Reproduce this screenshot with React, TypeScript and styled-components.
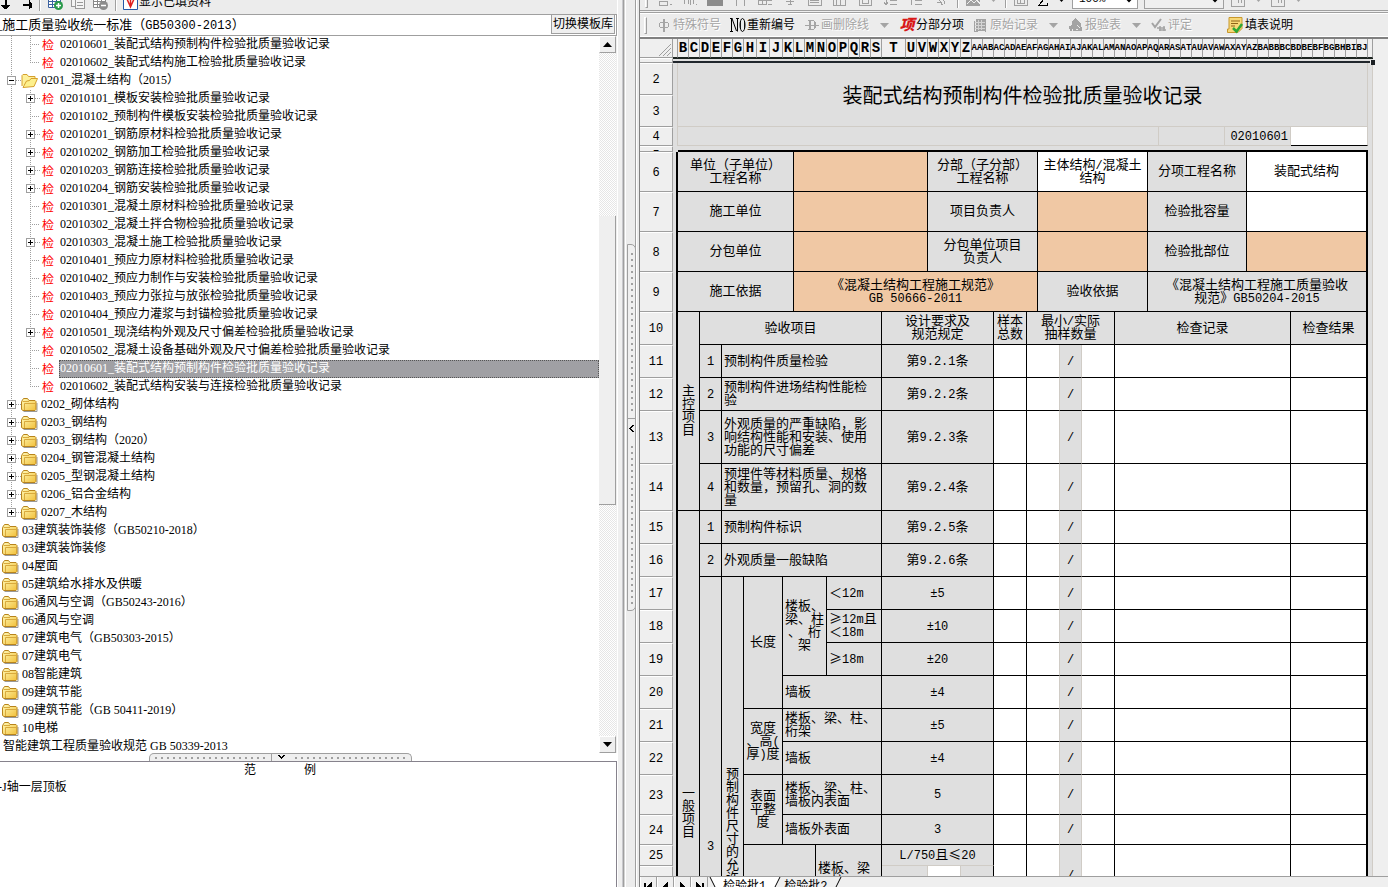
import React from "react";
import styled, { createGlobalStyle, css } from "styled-components";

const GlobalStyle = createGlobalStyle`
  *, *::before, *::after { box-sizing: border-box; }
  html, body { margin: 0; height: 100%; overflow: hidden; background: #efefef; }
  #root { height: 100%; }
  body, button, input, select {
    font-family: "Liberation Serif", "Noto Sans CJK SC", serif;
    font-size: 12px;
    color: #000;
  }
  button { margin: 0; padding: 0; border: 0; background: none; }
`;

const LINE = "#9f9f9f";
const FAINT = "#d0ccc6";
const GREY = "#dfdfdf";
const PEACH = "#f0c8a4";

const Half = styled.span`
  font-family: "Liberation Mono", monospace;
  font-size: 12px;
  line-height: 0;
`;

/* Latin runs are set in a fixed-pitch face beside the Chinese text. */
function Mixed({ text }: { text: string }) {
  return (
    <>
      {text.split(/([\x20-\x7e±]+)/).map((part, i) =>
        i % 2 ? <Half key={i}>{part}</Half> : part
      )}
    </>
  );
}

/* ---------- frame ---------- */

const Window = styled.div`
  display: grid;
  grid-template-columns: minmax(0, 617fr) 23px minmax(0, 748fr);
  height: 100vh;
  background: #efefef;
`;

const LeftPane = styled.section`
  display: flex;
  flex-direction: column;
  min-height: 0;
`;

const RightPane = styled.section`
  display: flex;
  flex-direction: column;
  min-height: 0;
  overflow: hidden;
`;

const SplitterBar = styled.div`
  display: flex;
  flex-direction: column;
  align-items: flex-end;
  justify-content: center;
  padding: 0 4px 32px 0;
  background: linear-gradient(
    90deg,
    #fff 0 1px, #efefef 1px 5px, #c8c8cc 5px 6px, ${LINE} 6px 7px, #d4d4d4 7px 8px,
    #fff 8px 9px, #ececec 9px 18px, ${LINE} 18px 19px, #fff 19px 20px,
    #ececec 20px 22px, #808080 22px 23px
  );
`;

const SideGrip = styled.div`
  display: flex;
  flex-direction: column;
  width: 9px;
  height: 367px;
  border: 1px solid ${LINE};
  border-radius: 0 5px 5px 0;
  background: #efefef;
`;

const SideDots = styled.div`
  flex: 1;
  margin: 8px 2px 4px 3px;
  background-image: linear-gradient(${LINE} 2px, #efefef 2px);
  background-size: 2px 6px;
  background-repeat: repeat-y;
`;

const GripButton = styled.button<{ $wide?: boolean }>`
  display: flex;
  align-items: center;
  justify-content: center;
  background: #efefef;
  border: 0 solid ${LINE};
  ${(p) => (p.$wide ? css`width: 19px; border-left-width: 1px;` : css`height: 20px; border-top-width: 1px;`)}
`;

/* ---------- left tool bar ---------- */

const ClippedBar = styled.div<{ $h: number }>`
  flex: 0 0 ${(p) => p.$h}px;
  overflow: hidden;
  background: #ececec;
  border-bottom: 1px solid ${LINE};
`;

const LeftTools = styled.div`
  display: flex;
  align-items: center;
  height: 24px;
  margin-top: -10px;
  gap: 6px;
`;

const ToolButton = styled.button<{ $off?: boolean }>`
  display: flex;
  align-items: center;
  gap: 1px;
  white-space: nowrap;
  line-height: 16px;
  color: ${(p) => (p.$off ? "#a4a4a4" : "#000")};
  text-shadow: ${(p) => (p.$off ? "1px 1px 0 #fff" : "none")};
`;

const Divider = styled.span`
  width: 2px;
  height: 18px;
  border-left: 1px solid ${LINE};
  border-right: 1px solid #fff;
`;

const CheckLabel = styled.label`
  display: flex;
  align-items: center;
  gap: 1px;
  line-height: 16px;
`;

const LibraryRow = styled.header`
  display: flex;
  flex: 0 0 21px;
  justify-content: space-between;
  background: #fff;
  border-bottom: 1px solid ${LINE};
  border-right: 1px solid ${LINE};
  padding-right: 1px;
`;

const LibraryName = styled.div`
  margin-left: -5px;
  font-family: "Noto Sans CJK SC", sans-serif;
  font-size: 13px;
  line-height: 17px;
  white-space: nowrap;
`;

const SwitchButton = styled.button`
  width: 64px;
  height: 19px;
  background: #efefef;
  border: 1px solid ${LINE};
  border-top: 0;
  line-height: 18px;
  white-space: nowrap;
`;

/* ---------- tree ---------- */

const TreePanel = styled.div`
  display: flex;
  flex: 1;
  min-height: 0;
  background: #fff;
  overflow: hidden;
`;

const TreeList = styled.ul`
  flex: 1;
  min-width: 0;
  margin: 0;
  padding: 0;
  list-style: none;
  overflow: hidden;
`;

const TreeRow = styled.li`
  display: flex;
  height: 18px;
  padding-left: 2px;
`;

const Guide = styled.span<{ $end?: boolean; $branch?: boolean; $box?: boolean }>`
  display: flex;
  flex: 0 0 19px;
  align-items: center;
  padding: 0 0 2px ${(p) => (p.$box ? 5 : 9)}px;
  background: repeating-linear-gradient(${LINE} 0 1px, transparent 1px 2px) 9px 0 / 1px
    ${(p) => (p.$end ? 9 : 18)}px no-repeat;

  &::after {
    content: "";
    flex: 1;
    height: ${(p) => (p.$branch ? 1 : 0)}px;
    background: repeating-linear-gradient(90deg, ${LINE} 0 1px, transparent 1px 2px);
  }
`;

const NodeIcon = styled.span`
  display: flex;
  flex: 0 0 19px;
  align-items: center;
  padding-bottom: 1px;
`;

const InspectMark = styled.span`
  padding: 2px 0 0 2px;
  color: #f00;
  line-height: 16px;
`;

const NodeLabel = styled.span<{ $on?: boolean }>`
  flex: ${(p) => (p.$on ? "1" : "0 0 auto")};
  padding-left: 1px;
  line-height: 17px;
  white-space: nowrap;
  ${(p) =>
    p.$on &&
    css`
      padding-left: 0;
      background: #a0a0a4;
      color: #fff;
      border: 1px dotted #555;
      line-height: 15px;
    `}
`;

const ScrollTrack = styled.div`
  display: flex;
  flex: 0 0 18px;
  flex-direction: column;
  background: repeating-conic-gradient(#e6e6e6 0 25%, #fff 0 50%) 0 0 / 2px 2px;
  border-right: 1px solid #efefef;
`;

const ScrollButton = styled.button`
  display: flex;
  flex: 0 0 17px;
  align-items: center;
  justify-content: center;
  background: #efefef;
  border: 1px solid ${LINE};
  border-top-color: #fff;
  border-left-color: #fff;
`;

const TrackGap = styled.div<{ $grow: number }>`
  flex: ${(p) => p.$grow} 0 0;
`;

const Thumb = styled.div`
  flex: 289 0 0;
  background: #efefef;
  border-right: 1px solid ${LINE};
  border-bottom: 1px solid ${LINE};
`;

const BottomGripRow = styled.div`
  display: flex;
  flex: 0 0 9px;
  justify-content: center;
  padding-right: 56px;
  background: #fff;
  border-bottom: 1px solid #86828c;
`;

const BottomGrip = styled.div`
  display: flex;
  width: 263px;
  border: 1px solid ${LINE};
  border-bottom: 0;
  border-radius: 5px 5px 0 0;
  background: #efefef;
`;

const BottomDots = styled.div`
  flex: 1;
  height: 2px;
  margin: 3px 3px 0 5px;
  background-image: linear-gradient(90deg, ${LINE} 2px, #efefef 2px);
  background-size: 6px 2px;
`;

const ExamplePanel = styled.div`
  flex: 0 0 125px;
  background: #fff;
  border-right: 1px solid #86828c;
  overflow: hidden;
`;

const ExampleHead = styled.h2`
  display: flex;
  justify-content: center;
  gap: 48px;
  margin: 0;
  padding-right: 56px;
  font-size: 12px;
  font-weight: 400;
  line-height: 17px;
`;

const ExampleLine = styled.div`
  margin-left: -2px;
  line-height: 16px;
`;

/* ---------- right tool bars ---------- */

const FormatTools = styled.div`
  display: flex;
  align-items: center;
  height: 24px;
  margin-top: -13px;
  padding-left: 5px;
  gap: 9px;
`;

const TightTools = styled.div`
  display: flex;
  align-items: center;
  gap: 6px;
`;

const ZoomSelect = styled.select`
  width: 66px;
  height: 20px;
  padding: 0 2px;
  border: 1px solid ${LINE};
  border-radius: 0;
  background: #fff;
  font-family: "Liberation Mono", monospace;
  font-size: 11px;
`;

const StyleSelect = styled(ZoomSelect)`
  width: 80px;
  background: #efefef;
`;

const ActionTools = styled.div`
  display: flex;
  flex: 0 0 27px;
  align-items: center;
  gap: 9px;
  padding-left: 4px;
  background: #ececec;
  border-top: 1px solid ${LINE};
  border-bottom: 2px solid #808080;
  box-shadow: inset 0 1px 0 #fff, inset 0 -1px 0 #fff;
  margin-top: 1px;
`;

const BarGrip = styled.span`
  width: 3px;
  height: 17px;
  border: 1px solid ${LINE};
  border-left-color: #fff;
  border-top-color: #fff;
`;

const CaretButton = styled.button`
  display: flex;
  width: 12px;
  justify-content: center;
`;

const Gap = styled.span<{ $w: number }>`
  flex: 0 0 ${(p) => p.$w}px;
`;

/* ---------- sheet ---------- */

const SheetView = styled.div`
  position: relative;
  flex: 1;
  min-height: 0;
  overflow: hidden;
  background: #efefef;
`;

const ColumnStrip = styled.div`
  display: flex;
  height: 19px;
`;

const Corner = styled.div`
  display: flex;
  flex: 0 0 33px;
  justify-content: flex-end;
  align-items: flex-end;
  border-right: 1px solid ${LINE};
  border-bottom: 1px solid ${LINE};
`;

const ColumnHead = styled.div<{ $w: number; $small?: boolean }>`
  display: flex;
  flex: 0 0 ${(p) => p.$w}px;
  min-width: 0;
  justify-content: center;
  border-right: 1px solid ${LINE};
  border-bottom: 1px solid #1c2420;
  font: 700 ${(p) => (p.$small ? 9 : 14)}px/18px "Liberation Mono", monospace;
`;

const Grid = styled.table`
  width: 733px;
  table-layout: fixed;
  border-collapse: separate;
  border-spacing: 0;
  font-family: "Noto Sans CJK SC", sans-serif;
  font-size: 13px;
  line-height: 13px;
`;

const GridRow = styled.tr<{ $h: number }>`
  height: ${(p) => p.$h}px;
`;

const RowHead = styled.th<{ $h: number }>`
  padding: 0 0 ${(p) => (p.$h > 18 ? 4 : 0)}px;
  font-weight: 400;
  background: #efefef;
  border-top: 1px solid #fff;
  border-right: 1px solid ${LINE};
  border-bottom: 1px solid ${LINE};
`;

const RowNumber = styled.span<{ $max: number }>`
  display: block;
  max-height: ${(p) => p.$max}px;
  overflow: hidden;
`;

const Cell = styled.td<{
  $bg?: string;
  $align?: string;
  $right?: string;
  $bottom?: string;
  $top?: string;
  $size?: number;
  $filled?: boolean;
}>`
  padding: 0 2px ${(p) => (p.$filled && !p.$size ? 4 : 0)}px;
  overflow: hidden;
  white-space: pre;
  vertical-align: middle;
  text-align: ${(p) => p.$align ?? "center"};
  background: ${(p) => p.$bg ?? GREY};
  border-right: ${(p) => p.$right ?? "1px solid #000"};
  border-bottom: ${(p) => p.$bottom ?? "1px solid #000"};
  border-top: ${(p) => p.$top ?? "0"};
  font-size: ${(p) => p.$size ?? 13}px;
  line-height: ${(p) => (p.$size ? p.$size + 4 : 13)}px;
`;

const FillHandle = styled.span`
  position: absolute;
  left: 730px;
  top: 21px;
  width: 5px;
  height: 5px;
  background: #1c2024;
  border-left: 1px solid #efefef;
`;

const SheetTabs = styled.nav`
  display: flex;
  flex: 0 0 11px;
  overflow: hidden;
  border-top: 1px solid ${LINE};
`;

const TabNav = styled.button`
  display: flex;
  flex: 0 0 17px;
  height: 18px;
  align-items: center;
  justify-content: center;
  border-right: 1px solid ${LINE};
  border-left: 1px solid #fff;
`;

const Tab = styled.button<{ $on?: boolean }>`
  height: 18px;
  padding: 0 3px;
  line-height: 17px;
  white-space: nowrap;
  background: ${(p) => (p.$on ? "#fff" : "#efefef")};
`;

/* ---------- drawings ---------- */

const Svg = ({ w = 16, h = 16, children }: { w?: number; h?: number; children: React.ReactNode }) => (
  <svg width={w} height={h} viewBox={`0 0 ${w} ${h}`} fill="none" shapeRendering="crispEdges" aria-hidden="true">
    {children}
  </svg>
);

const Triangle = ({ dir = "down", color = "#000" }: { dir?: "up" | "down"; color?: string }) => (
  <svg width="9" height="5" viewBox="0 0 9 5" aria-hidden="true">
    <path d={dir === "up" ? "M4.500 0 9 5H0Z" : "M0 0h9L4.500 5Z"} fill={color} />
  </svg>
);

const Folder = ({ open }: { open?: boolean }) => (
  <svg width="17" height="16" viewBox="0 0 17 16" fill="none" aria-hidden="true">
    <defs>
      <linearGradient id="fold" x1="0" y1="0" x2="1" y2="1">
        <stop offset="0" stopColor="#fffab8" />
        <stop offset="1" stopColor="#f2bf38" />
      </linearGradient>
    </defs>
    {open ? (
      <>
        <path d="M1 13V2.500l1-1h4l1.500 2H14V7" fill="#fdf09a" stroke="#d6a02c" />
        <path d="M2 14.500 5.500 8l3-.5 1.500-2h6.500L13 13.500Z" fill="#fdf08c" stroke="#d6a02c" />
      </>
    ) : (
      <>
        <path d="M2.500 14.500h13.500V6" stroke="#999" />
        <path d="M.5 12.500V4.500l2-3h4l1.500 2h6l1 1v8l-1 1h-12Z" fill="url(#fold)" stroke="#b8841c" />
        <path d="M1.500 4.500h6.500M3.500 13V6.500h11" stroke="#d9a93c" />
      </>
    )}
  </svg>
);

const Expander = ({ open }: { open?: boolean }) => (
  <Svg w={9} h={9}>
    <path d="M.5.5h8v8h-8Z" fill="#fff" stroke={LINE} />
    <path d={open ? "M2 4.500h5" : "M2 4.500h5M4.500 2v5"} stroke="#000" />
  </Svg>
);

const SheetIcon = ({ badge }: { badge?: string }) => (
  <svg width="17" height="18" viewBox="0 0 17 18" aria-hidden="true">
    <path d="M1.500 1.500h12v13h-12ZM1.500 5.500h12M1.500 8.500h12M1.500 11.500h12M5.500 1.500v13M9.500 1.500v13" stroke={badge === "+" ? "#3c62a0" : "#888"} fill="#fff" />
    <circle cx="11.500" cy="12.500" r="4.500" fill={badge === "+" ? "#2a9a4a" : "#8c8c8c"} />
    <path d={badge === "+" ? "M9 12.500h5M11.500 10v5" : "M9 12.500h5"} stroke="#fff" strokeWidth="1.500" />
  </svg>
);

const CopyIcon = () => (
  <Svg>
    <path d="M1.500 1.500h8v11h-8Z" fill="#f4f4f4" stroke="#999" />
    <path d="M5.500 3.500h9v11h-9Z" fill="#f4f4f4" stroke="#999" />
    <path d="M7 8.500h6M7 11.500h6" stroke="#999" />
  </Svg>
);

const FilledIcon = () => (
  <svg width="15" height="16" viewBox="0 0 15 16" aria-hidden="true">
    <path d="M.5.5h14v15H.5Z" fill="#fff" stroke="#2458a8" />
    <path d="M4 5 7.500 13 11 5M7.500 13V6" stroke="#e02020" strokeWidth="1.500" fill="none" />
  </svg>
);

const SymbolIcon = () => (
  <Svg>
    <path d="M4 5.500h8M4 10.500h8M3.500 6v4M12.500 6v4M7.500 2v13M8.500 2v13" stroke="#a4a4a4" />
  </Svg>
);

const NumberIcon = () => (
  <svg width="16" height="16" viewBox="0 0 16 16" fill="none" stroke="#000" aria-hidden="true">
    <path d="M0 1.500h2.500M0 14.500h3M1.500 1v13M2 1.500 6.500 14M7.500 1v13.500M6 1.500h3" />
    <ellipse cx="12.500" cy="8" rx="2.500" ry="6.500" />
    <path d="M10.500 4v8M14.500 4v8" strokeWidth=".8" />
  </svg>
);

const StrikeIcon = () => (
  <Svg>
    <path d="M4 3.500h6M4 12.500h6M5.500 3v10M11.500 5v6M10.500 4v8M6.500 4v8M1 8.500h14" stroke="#a4a4a4" />
  </Svg>
);

const RedItem = styled.span`
  width: 16px;
  color: #d81818;
  font-size: 15px;
  font-weight: 900;
  font-style: italic;
`;

const RecordIcon = () => (
  <Svg>
    <path d="M3 2h9v12H3Z" fill="#a4a4a4" />
    <path d="M5 3v10M8 3v10M2 5h10M2 8h10M2 11h10" stroke="#d4d4d4" />
    <path d="M1.500 4v10h3M12.500 2v13" stroke="#a4a4a4" />
  </Svg>
);

const ReportIcon = () => (
  <Svg>
    <path d="M4 5 7 1l3 3 3 2 1 8H2L1 9l3-1Z" fill="#a4a4a4" />
    <path d="M4 12v2M9 8l3 3M8 12h2" stroke="#ececec" />
  </Svg>
);

const RateIcon = () => (
  <svg width="16" height="16" viewBox="0 0 16 16" fill="none" stroke="#a4a4a4" aria-hidden="true">
    <path d="m1 6 3 4 6-8" strokeWidth="2" />
    <path d="M6 11h8M9 9v5M8 13h7M13 9v5" strokeWidth="1.500" />
  </svg>
);

const GuideIcon = () => (
  <svg width="17" height="17" viewBox="0 0 17 17" aria-hidden="true">
    <path d="M2 .5h13v11l-4 4H.5V12H2Z" fill="#f7d878" stroke="#c8982c" />
    <path d="M4 4h9M4 6.500h7M4 9h4" stroke="#8c6418" />
    <path d="m6 11 3.500 3.500L15 7" stroke="#2fa834" strokeWidth="2.500" fill="none" />
  </svg>
);

/* Outline shapes of the greyed format icons. */
const formatIcons = [
  "M3 3h7v5H3ZM2 10h8v4H2Z M13 4v3M13 13h2",
  "M2 13V7h4v6M8 4v10M11 6v7M14 13h1",
  "",
  "M4 15V5h8v10M4 8h8",
  "M1 5h8v8H1ZM1 9h14M5 5v8M11 13h4",
  "M8 2v12M4 10h8M6 13h4",
  "M1 6h13v8H1ZM3 9h9M3 11h9M14 2v12",
  "M1 7h12v7H1ZM4 7v7M8 7v7M13 3v9",
  "M2 4h12v10H2ZM5 7h6v5H5Z",
  "M4 3v11M2 11l2 3 2-3M8 9h7M8 13h7",
  "M4 3v11M2 6l2-3 2 3M8 9h7M8 13h7",
  "M3 4l8 10M5 11h4v3M10 5l3 8",
];

function FormatIcon({ d }: { d: string }) {
  return (
    <Svg>{d ? <path d={d} stroke="#a0a0a0" /> : <path d="M0 1h16v14H0Z" fill="#8c8c8c" />}</Svg>
  );
}

/* ---------- tree data ---------- */

type Node = { lv: number; t: string; box?: "+" | "-"; on?: boolean; last?: boolean };

const nodes: Node[] = [
  { lv: 2, t: "02010601_装配式结构预制构件检验批质量验收记录" },
  { lv: 2, t: "02010602_装配式结构施工检验批质量验收记录", last: true },
  { lv: 1, t: "0201_混凝土结构（2015）", box: "-" },
  { lv: 2, t: "02010101_模板安装检验批质量验收记录", box: "+" },
  { lv: 2, t: "02010102_预制构件模板安装检验批质量验收记录" },
  { lv: 2, t: "02010201_钢筋原材料检验批质量验收记录", box: "+" },
  { lv: 2, t: "02010202_钢筋加工检验批质量验收记录", box: "+" },
  { lv: 2, t: "02010203_钢筋连接检验批质量验收记录", box: "+" },
  { lv: 2, t: "02010204_钢筋安装检验批质量验收记录", box: "+" },
  { lv: 2, t: "02010301_混凝土原材料检验批质量验收记录" },
  { lv: 2, t: "02010302_混凝土拌合物检验批质量验收记录" },
  { lv: 2, t: "02010303_混凝土施工检验批质量验收记录", box: "+" },
  { lv: 2, t: "02010401_预应力原材料检验批质量验收记录" },
  { lv: 2, t: "02010402_预应力制作与安装检验批质量验收记录" },
  { lv: 2, t: "02010403_预应力张拉与放张检验批质量验收记录" },
  { lv: 2, t: "02010404_预应力灌浆与封锚检验批质量验收记录" },
  { lv: 2, t: "02010501_现浇结构外观及尺寸偏差检验批质量验收记录", box: "+" },
  { lv: 2, t: "02010502_混凝土设备基础外观及尺寸偏差检验批质量验收记录" },
  { lv: 2, t: "02010601_装配式结构预制构件检验批质量验收记录", on: true },
  { lv: 2, t: "02010602_装配式结构安装与连接检验批质量验收记录", last: true },
  { lv: 1, t: "0202_砌体结构", box: "+" },
  { lv: 1, t: "0203_钢结构", box: "+" },
  { lv: 1, t: "0203_钢结构（2020）", box: "+" },
  { lv: 1, t: "0204_钢管混凝土结构", box: "+" },
  { lv: 1, t: "0205_型钢混凝土结构", box: "+" },
  { lv: 1, t: "0206_铝合金结构", box: "+" },
  { lv: 1, t: "0207_木结构", box: "+", last: true },
  { lv: 0, t: "03建筑装饰装修（GB50210-2018）" },
  { lv: 0, t: "03建筑装饰装修" },
  { lv: 0, t: "04屋面" },
  { lv: 0, t: "05建筑给水排水及供暖" },
  { lv: 0, t: "06通风与空调（GB50243-2016）" },
  { lv: 0, t: "06通风与空调" },
  { lv: 0, t: "07建筑电气（GB50303-2015）" },
  { lv: 0, t: "07建筑电气" },
  { lv: 0, t: "08智能建筑" },
  { lv: 0, t: "09建筑节能" },
  { lv: 0, t: "09建筑节能（GB 50411-2019）" },
  { lv: 0, t: "10电梯" },
  { lv: -1, t: "智能建筑工程质量验收规范 GB 50339-2013" },
];

function TreeNode({ n }: { n: Node }) {
  return (
    <TreeRow>
      {n.lv === 2 && <Guide />}
      {n.lv > 0 && (
        <Guide $branch $end={n.last} $box={!!n.box}>
          {n.box && <Expander open={n.box === "-"} />}
        </Guide>
      )}
      {n.lv >= 0 && (
        <NodeIcon>{n.lv === 2 ? <InspectMark>检</InspectMark> : <Folder open={n.box === "-"} />}</NodeIcon>
      )}
      <NodeLabel $on={n.on}>{n.t}</NodeLabel>
    </TreeRow>
  );
}

/* ---------- sheet data ---------- */

const colWidths = [33, 5, 22, 22, 22, 39, 11, 22, 11, 55, 46, 33, 33, 33, 11, 22, 22, 33, 33, 11, 66, 22, 44, 77, 5];

const letters = (() => {
  const out: { t: string; w: number }[] = [];
  const abc = "ABCDEFGHIJKLMNOPQRSTUVWXYZ";
  for (let i = 1; i < 62; i++) {
    const t = i < 26 ? abc[i] : abc[Math.floor(i / 26) - 1] + abc[i % 26];
    out.push({ t, w: "HIJ".includes(t) ? 13 : t === "T" ? 24 : 11 });
  }
  return out;
})();

type C = {
  t?: string;
  cs?: number;
  rs?: number;
  bg?: string;
  al?: string;
  r?: string;
  b?: string;
  top?: string;
  size?: number;
};

const faint = `1px solid ${FAINT}`;
const thick = "2px solid #000";
const none = "0";
const edgeL: C = { r: thick, b: none };
const edgeR: C = { r: faint, b: none };
const white = "#fff";

const fill = (rs = 1): C[] => [
  { bg: white, rs },
  { bg: white, cs: 2, r: faint, rs },
  { t: "/", r: faint, rs },
  { bg: white, rs },
  { bg: white, cs: 5, rs },
  { bg: white, r: thick, rs },
];

const rows: { n: string; h: number; c: C[] }[] = [
  { n: "·", h: 5, c: [{ cs: 24, r: none, top: "1px solid #1c2420", b: "2px solid #20262c" }] },
  {
    n: "2", h: 32,
    c: [{ r: faint, b: none }, { t: "装配式结构预制构件检验批质量验收记录", cs: 22, rs: 2, size: 20, r: faint, b: faint }, edgeR],
  },
  { n: "3", h: 32, c: [{ r: faint, b: none }, edgeR] },
  {
    n: "4", h: 19,
    c: [
      { r: faint, b: none },
      { cs: 18, r: faint, b: faint },
      { r: faint, b: faint },
      { t: "02010601", cs: 2, al: "right", r: faint, b: faint },
      { bg: white, r: faint },
      edgeR,
    ],
  },
  { n: "5", h: 6, c: [{ r: none, b: none }, { cs: 22, r: none, b: thick }, edgeR] },
  {
    n: "6", h: 40,
    c: [
      edgeL, { t: "单位（子单位）\n工程名称", cs: 5 }, { bg: PEACH, cs: 4 }, { t: "分部（子分部）\n工程名称", cs: 4 },
      { t: "主体结构/混凝土\n结构", cs: 4, bg: white }, { t: "分项工程名称", cs: 3 }, { t: "装配式结构", cs: 2, bg: white, r: thick }, edgeR,
    ],
  },
  {
    n: "7", h: 40,
    c: [
      edgeL, { t: "施工单位", cs: 5 }, { bg: PEACH, cs: 4 }, { t: "项目负责人", cs: 4 },
      { cs: 4, bg: PEACH }, { t: "检验批容量", cs: 3 }, { cs: 2, bg: white, r: thick }, edgeR,
    ],
  },
  {
    n: "8", h: 40,
    c: [
      edgeL, { t: "分包单位", cs: 5 }, { bg: PEACH, cs: 4 }, { t: "分包单位项目\n负责人", cs: 4 },
      { cs: 4, bg: PEACH }, { t: "检验批部位", cs: 3 }, { cs: 2, bg: PEACH, r: thick }, edgeR,
    ],
  },
  {
    n: "9", h: 40,
    c: [
      edgeL, { t: "施工依据", cs: 5 }, { t: "《混凝土结构工程施工规范》\nGB 50666-2011", bg: PEACH, cs: 8 },
      { t: "验收依据", cs: 4 }, { t: "《混凝土结构工程施工质量验收\n规范》GB50204-2015", cs: 5, r: thick }, edgeR,
    ],
  },
  {
    n: "10", h: 33,
    c: [
      edgeL, { t: "主\n控\n项\n目", rs: 5 }, { t: "验收项目", cs: 7 }, { t: "设计要求及\n规范规定", cs: 3 }, { t: "样本\n总数" },
      { t: "最小/实际\n抽样数量", cs: 4 }, { t: "检查记录", cs: 5 }, { t: "检查结果", r: thick }, edgeR,
    ],
  },
  { n: "11", h: 33, c: [edgeL, { t: "1" }, { t: "预制构件质量检验", cs: 6, al: "left" }, { t: "第9.2.1条", cs: 3 }, ...fill(), edgeR] },
  { n: "12", h: 33, c: [edgeL, { t: "2" }, { t: "预制构件进场结构性能检\n验", cs: 6, al: "left" }, { t: "第9.2.2条", cs: 3 }, ...fill(), edgeR] },
  { n: "13", h: 53, c: [edgeL, { t: "3" }, { t: "外观质量的严重缺陷，影\n响结构性能和安装、使用\n功能的尺寸偏差", cs: 6, al: "left" }, { t: "第9.2.3条", cs: 3 }, ...fill(), edgeR] },
  { n: "14", h: 47, c: [edgeL, { t: "4" }, { t: "预埋件等材料质量、规格\n和数量，预留孔、洞的数\n量", cs: 6, al: "left" }, { t: "第9.2.4条", cs: 3 }, ...fill(), edgeR] },
  { n: "15", h: 33, c: [edgeL, { t: "一\n般\n项\n目", rs: 13 }, { t: "1" }, { t: "预制构件标识", cs: 6, al: "left" }, { t: "第9.2.5条", cs: 3 }, ...fill(), edgeR] },
  { n: "16", h: 33, c: [edgeL, { t: "2" }, { t: "外观质量一般缺陷", cs: 6, al: "left" }, { t: "第9.2.6条", cs: 3 }, ...fill(), edgeR] },
  {
    n: "17", h: 33,
    c: [
      edgeL, { t: "3", rs: 11 }, { t: "预\n制\n构\n件\n尺\n寸\n的\n允\n许\n偏\n差\n值", rs: 11 }, { t: "长度", rs: 4 },
      { t: "楼板、\n梁、柱\n、 桁\n架", cs: 3, rs: 3 }, { t: "＜12m", al: "left" }, { t: "±5", cs: 3 }, ...fill(), edgeR,
    ],
  },
  { n: "18", h: 33, c: [edgeL, { t: "≥12m且\n＜18m", al: "left" }, { t: "±10", cs: 3 }, ...fill(), edgeR] },
  { n: "19", h: 33, c: [edgeL, { t: "≥18m", al: "left" }, { t: "±20", cs: 3 }, ...fill(), edgeR] },
  { n: "20", h: 33, c: [edgeL, { t: "墙板", cs: 4, al: "left" }, { t: "±4", cs: 3 }, ...fill(), edgeR] },
  { n: "21", h: 33, c: [edgeL, { t: "宽度\n、高(\n厚)度", rs: 2 }, { t: "楼板、梁、柱、\n桁架", cs: 4, al: "left" }, { t: "±5", cs: 3 }, ...fill(), edgeR] },
  { n: "22", h: 33, c: [edgeL, { t: "墙板", cs: 4, al: "left" }, { t: "±4", cs: 3 }, ...fill(), edgeR] },
  { n: "23", h: 40, c: [edgeL, { t: "表面\n平整\n度", rs: 2 }, { t: "楼板、梁、柱、\n墙板内表面", cs: 4, al: "left" }, { t: "5", cs: 3 }, ...fill(), edgeR] },
  { n: "24", h: 30, c: [edgeL, { t: "墙板外表面", cs: 4, al: "left" }, { t: "3", cs: 3 }, ...fill(), edgeR] },
  {
    n: "25", h: 21,
    c: [edgeL, { t: "侧向\n弯曲", cs: 3, rs: 3 }, { t: "楼板、梁\n、柱", cs: 2, rs: 2, al: "left" }, { t: "L/750且≤20", cs: 3, b: faint }, ...fill(2), edgeR],
  },
  { n: "26", h: 40, c: [edgeL, { r: faint }, { bg: white, r: faint }, {}, edgeR] },
  { n: "27", h: 210, c: [edgeL, { cs: 2 }, { cs: 3 }, ...fill(), edgeR] },
];

function Sheet() {
  return (
    <Grid>
      <colgroup>
        {colWidths.map((w, i) => (
          <col key={i} style={{ width: w }} />
        ))}
      </colgroup>
      <tbody>
        {rows.map((r) => (
          <GridRow key={r.n} $h={r.h}>
            <RowHead scope="row" $h={r.h}>
              <RowNumber $max={Math.min(13, r.h - 2)}>
                <Mixed text={r.n} />
              </RowNumber>
            </RowHead>
            {r.c.map((c, i) => (
              <Cell
                key={i}
                colSpan={c.cs}
                rowSpan={c.rs}
                $bg={c.bg}
                $align={c.al}
                $right={c.r}
                $bottom={c.b}
                $top={c.top}
                $size={c.size}
                $filled={!!c.t}
              >
                {c.t && <Mixed text={c.t} />}
              </Cell>
            ))}
          </GridRow>
        ))}
      </tbody>
    </Grid>
  );
}

function Caret() {
  return (
    <CaretButton aria-label="更多">
      <Triangle color="#a4a4a4" />
    </CaretButton>
  );
}

export default function App() {
  return (
    <Window>
      <GlobalStyle />
      <LeftPane>
        <ClippedBar $h={15}>
          <LeftTools>
            <ToolButton aria-label="下移">
              <Svg><path d="M5 4v8M6 4v8M1 11.500h9M2 12.500h7M4 14.500h3M3 13.500h5" stroke="#000" /></Svg>
            </ToolButton>
            <ToolButton aria-label="右移">
              <Svg w={11}><path d="M1 10.500h9M1 11.500h9M7.500 6v9M8.500 8v6M9.500 9v5" stroke="#000" /></Svg>
            </ToolButton>
            <Divider />
            <ToolButton aria-label="新增"><SheetIcon badge="+" /></ToolButton>
            <ToolButton aria-label="复制"><CopyIcon /></ToolButton>
            <ToolButton aria-label="删除"><SheetIcon badge="-" /></ToolButton>
            <Divider />
            <CheckLabel>
              <FilledIcon />
              显示已填资料
            </CheckLabel>
          </LeftTools>
        </ClippedBar>
        <LibraryRow>
          <LibraryName>
            <Mixed text="_施工质量验收统一标准（GB50300-2013）" />
          </LibraryName>
          <SwitchButton>切换模板库</SwitchButton>
        </LibraryRow>
        <TreePanel>
          <TreeList>
            {nodes.map((n, i) => (
              <TreeNode key={i} n={n} />
            ))}
          </TreeList>
          <ScrollTrack>
            <ScrollButton aria-label="向上滚动"><Triangle dir="up" /></ScrollButton>
            <TrackGap $grow={163} />
            <Thumb />
            <TrackGap $grow={231} />
            <ScrollButton aria-label="向下滚动"><Triangle /></ScrollButton>
          </ScrollTrack>
        </TreePanel>
        <BottomGripRow>
          <BottomGrip>
            <BottomDots />
            <GripButton $wide aria-label="收起范例">
              <Svg w={7} h={5}><path d="M0 .5h2M1 1.500h2M2 2.500h3M3 3.500h1M4 1.500h2M5 .5h2" stroke="#000" /></Svg>
            </GripButton>
            <BottomDots />
          </BottomGrip>
        </BottomGripRow>
        <ExamplePanel>
          <ExampleHead>
            <span>范</span>
            <span>例</span>
          </ExampleHead>
          <ExampleLine>-J轴一层顶板</ExampleLine>
        </ExamplePanel>
      </LeftPane>

      <SplitterBar>
        <SideGrip>
          <SideDots />
          <GripButton aria-label="收起左栏">
            <Svg w={5} h={7}><path d="M3 .5h2M2 1.500h2M1 2.500h2M0 3.500h2M1 4.500h2M2 5.500h2M3 6.500h2" stroke="#000" /></Svg>
          </GripButton>
          <SideDots />
        </SideGrip>
      </SplitterBar>

      <RightPane>
        <ClippedBar $h={11}>
          <FormatTools>
            <BarGrip />
            {formatIcons.map((d, i) => (
              <ToolButton key={i} aria-label={`格式 ${i + 1}`}>
                <FormatIcon d={d} />
              </ToolButton>
            ))}
            <TightTools>
              <Divider />
              <ToolButton aria-label="图片">
                <Svg><path d="M1 3h14v12H1Z" fill="#a0a0a0" /><path d="M2 13 6 9l3 3 3-3 3 4" stroke="#efefef" /></Svg>
              </ToolButton>
              <Caret />
              <Divider />
              <ToolButton aria-label="合并"><FormatIcon d="M1 3h13v11H1ZM4 7h7v5H4ZM7 7v5" /></ToolButton>
              <ToolButton aria-label="求和">
                <Svg><path d="M12 12v2H4l5-6-5-6h8v2" stroke="#000" /></Svg>
              </ToolButton>
              <Triangle />
              <ZoomSelect aria-label="显示比例" defaultValue="100%">
                <option>100%</option>
              </ZoomSelect>
              <StyleSelect aria-label="样式" />
              <ToolButton aria-label="插入"><FormatIcon d="M1 3h13v12H1ZM4 8h4v4M8 8h3v4" /></ToolButton>
              <Caret />
              <ToolButton aria-label="移除"><FormatIcon d="M1 3h13v12H1ZM4 8h4v4M8 8h3v4" /></ToolButton>
              <Caret />
            </TightTools>
          </FormatTools>
        </ClippedBar>
        <ActionTools>
          <BarGrip />
          <ToolButton $off><SymbolIcon />特殊符号</ToolButton>
          <ToolButton><NumberIcon />重新编号</ToolButton>
          <ToolButton $off><StrikeIcon />画删除线</ToolButton>
          <Caret />
          <ToolButton><RedItem aria-hidden="true">项</RedItem>分部分项</ToolButton>
          <ToolButton $off><RecordIcon />原始记录</ToolButton>
          <Caret />
          <ToolButton $off><ReportIcon />报验表</ToolButton>
          <Caret />
          <ToolButton $off><RateIcon />评定</ToolButton>
          <Gap $w={17} />
          <ToolButton><GuideIcon />填表说明</ToolButton>
        </ActionTools>
        <SheetView>
          <ColumnStrip>
            <Corner>
              <Svg w={14} h={14}><path d="M1 13 13 1M5 13l8-8M9 13l4-4" stroke={LINE} shapeRendering="auto" /></Svg>
            </Corner>
            <ColumnHead $w={5} />
            {letters.map((l) => (
              <ColumnHead key={l.t} $w={l.w} $small={l.t.length > 1}>{l.t}</ColumnHead>
            ))}
            <ColumnHead $w={5} />
          </ColumnStrip>
          <Sheet />
          <FillHandle />
        </SheetView>
        <SheetTabs>
          <TabNav aria-label="第一张"><Svg w={9} h={9}><path d="M.5 1v7M1.500 1v7" stroke="#000" /><path d="M8 0v9L3 4.500Z" fill="#000" /></Svg></TabNav>
          <TabNav aria-label="上一张"><Svg w={9} h={9}><path d="M7 0v9L2 4.500Z" fill="#000" /></Svg></TabNav>
          <TabNav aria-label="下一张"><Svg w={9} h={9}><path d="M2 0v9l5-4.500Z" fill="#000" /></Svg></TabNav>
          <TabNav aria-label="最后一张"><Svg w={9} h={9}><path d="M8.500 1v7M7.500 1v7" stroke="#000" /><path d="M1 0v9l5-4.500Z" fill="#000" /></Svg></TabNav>
          <Svg w={12} h={18}><path d="M2 0h10v18Z" fill="#fff" /><path d="m2 0 9 18" stroke="#000" shapeRendering="auto" /></Svg>
          <Tab $on><Mixed text="检验批1" /></Tab>
          <Svg w={12} h={18}><path d="M0 0h11L2 18H0Z" fill="#fff" /><path d="M11 0 2 18" stroke="#000" shapeRendering="auto" /></Svg>
          <Tab><Mixed text="检验批2" /></Tab>
          <Svg w={12} h={18}><path d="M11 0 2 18" stroke="#000" shapeRendering="auto" /></Svg>
        </SheetTabs>
      </RightPane>
    </Window>
  );
}
